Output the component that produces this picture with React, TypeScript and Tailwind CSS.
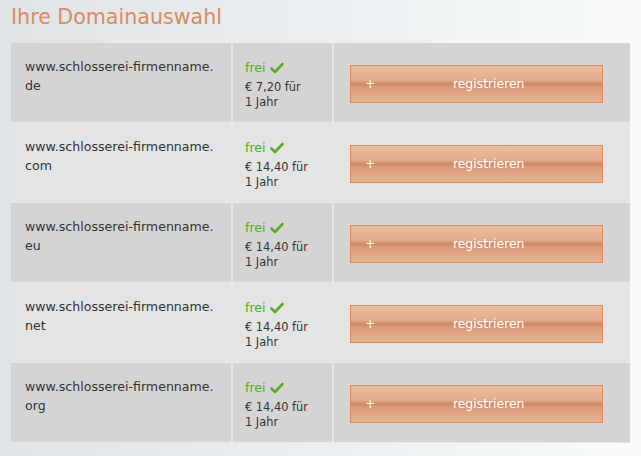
const domains = [
  { tld: "de", price: "€ 7,20 für" },
  { tld: "com", price: "€ 14,40 für" },
  { tld: "eu", price: "€ 14,40 für" },
  { tld: "net", price: "€ 14,40 für" },
  { tld: "org", price: "€ 14,40 für" },
];

function Check() {
  return (
    <svg width="14" height="12" viewBox="0 0 14 12" className="ml-1 inline-block">
      <path d="M1.5 6.5 L5 10 L12.5 2" fill="none" stroke="#5aab25" strokeWidth="2.6" strokeLinecap="round" strokeLinejoin="round" />
    </svg>
  );
}

export default function App() {
  return (
    <div
      className="h-[456px] w-[641px] overflow-hidden bg-gradient-to-r from-[#e1e4e7] via-[#eceff1] to-[#f9fbfb] text-[#333]"
      style={{ fontFamily: '"DejaVu Sans", Verdana, sans-serif' }}
    >
      <h1 className="pl-[11px] pt-[4px] text-[20.6px] leading-[26px] text-[#d88c5f]">Ihre Domainauswahl</h1>
      <div className="ml-[11px] mt-[13px] w-[619px]">
        {domains.map((d, i) => {
          const dark = i % 2 === 0;
          return (
            <div
              key={d.tld}
              className={`flex h-[80px] border-b border-[#e6e7e7] ${dark ? "bg-[#d4d4d4]" : "bg-[#e3e4e4]"}`}
            >
              <div className="w-[222px] border-r-2 border-[#e6e6e6] pl-[14px] pt-[14px] text-[12.6px] leading-[19px]">
                www.schlosserei-firmenname.
                <br />
                {d.tld}
              </div>
              <div className="w-[101px] border-r-2 border-[#e6e6e6] pl-[12px] pt-[17px]">
                <div className="flex items-center text-[12.6px] leading-[16px] text-[#5aab25]">
                  frei
                  <Check />
                </div>
                <div className="mt-[4px] text-[11.4px] leading-[15px]">
                  {d.price}
                  <br />1 Jahr
                </div>
              </div>
              <div className="flex flex-1 items-center pl-[16px] pt-[3px]">
                <button className="flex h-[38px] w-[253px] items-center border border-[#d98a5e] bg-[linear-gradient(to_bottom,#e8bda3_0%,#e2ab8b_40%,#d28760_50%,#dc9d79_60%,#e4b294_100%)] px-[14px] text-[12.4px] text-white">
                  <span>+</span>
                  <span className="flex-1 pl-[14px] text-center">registrieren</span>
                </button>
              </div>
            </div>
          );
        })}
      </div>
    </div>
  );
}
